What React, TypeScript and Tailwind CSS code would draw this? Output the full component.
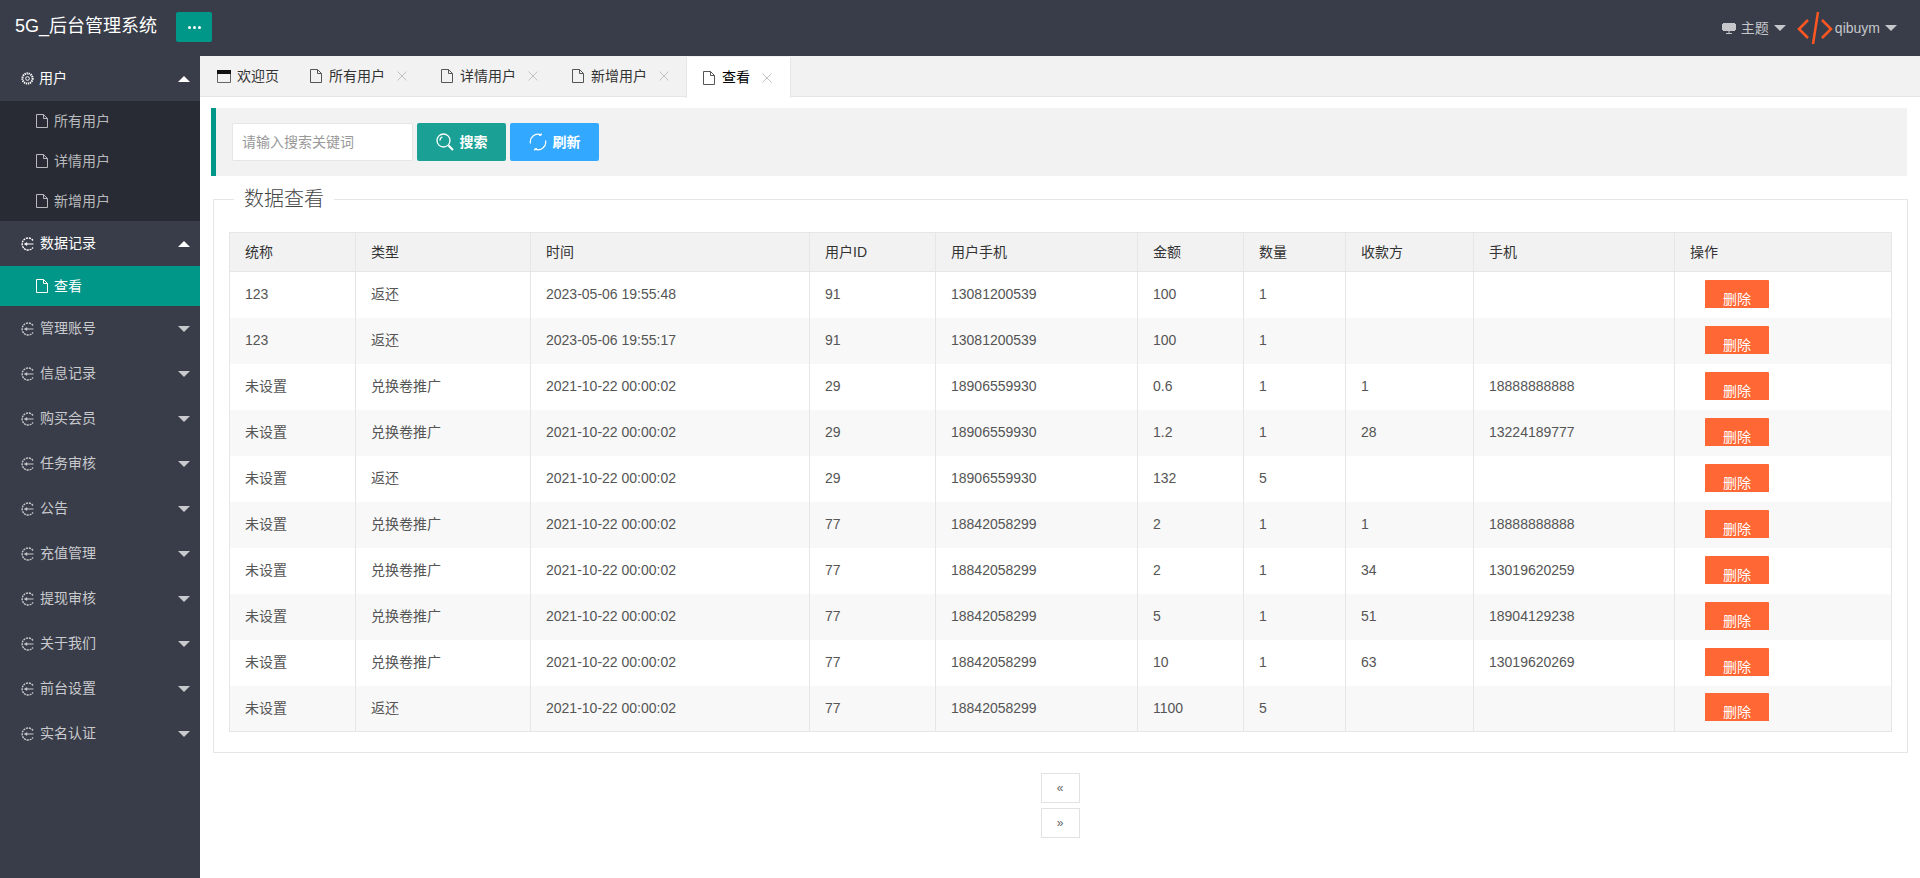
const menus = [
  { title: "用户", open: true, gear: true, subs: ["所有用户", "详情用户", "新增用户"] },
  { title: "数据记录", open: true, subs: ["查看"] },
  { title: "管理账号" },
  { title: "信息记录" },
  { title: "购买会员" },
  { title: "任务审核" },
  { title: "公告" },
  { title: "充值管理" },
  { title: "提现审核" },
  { title: "关于我们" },
  { title: "前台设置" },
  { title: "实名认证" },
]

const tabs = ["所有用户", "详情用户", "新增用户", "查看"]

const columns = [
  ["统称", "w-[126px]"],
  ["类型", "w-[175px]"],
  ["时间", "w-[279px]"],
  ["用户ID", "w-[126px]"],
  ["用户手机", "w-[202px]"],
  ["金额", "w-[106px]"],
  ["数量", "w-[102px]"],
  ["收款方", "w-[128px]"],
  ["手机", "w-[201px]"],
  ["操作", "w-[217px]"],
]

const rows = [
  ["123", "返还", "2023-05-06 19:55:48", "91", "13081200539", "100", "1", "", ""],
  ["123", "返还", "2023-05-06 19:55:17", "91", "13081200539", "100", "1", "", ""],
  ["未设置", "兑换卷推广", "2021-10-22 00:00:02", "29", "18906559930", "0.6", "1", "1", "18888888888"],
  ["未设置", "兑换卷推广", "2021-10-22 00:00:02", "29", "18906559930", "1.2", "1", "28", "13224189777"],
  ["未设置", "返还", "2021-10-22 00:00:02", "29", "18906559930", "132", "5", "", ""],
  ["未设置", "兑换卷推广", "2021-10-22 00:00:02", "77", "18842058299", "2", "1", "1", "18888888888"],
  ["未设置", "兑换卷推广", "2021-10-22 00:00:02", "77", "18842058299", "2", "1", "34", "13019620259"],
  ["未设置", "兑换卷推广", "2021-10-22 00:00:02", "77", "18842058299", "5", "1", "51", "18904129238"],
  ["未设置", "兑换卷推广", "2021-10-22 00:00:02", "77", "18842058299", "10", "1", "63", "13019620269"],
  ["未设置", "返还", "2021-10-22 00:00:02", "77", "18842058299", "1100", "5", "", ""],
]

const FileIcon = ({ className = "" }: { className?: string }) => (
  <svg viewBox="0 0 12 14" className={`w-[12px] h-[14px] shrink-0 ${className}`} fill="none" stroke="currentColor" strokeWidth="1">
    <path d="M.5 .5h7l4 4v9h-11z" />
    <path d="M7.500 .5v4h4" />
  </svg>
)

const GroupIcon = ({ gear }: { gear?: boolean }) =>
  gear ? (
    <svg viewBox="0 0 14 14" className="w-[13px] h-[13px] shrink-0" fill="none" stroke="currentColor">
      <circle cx="7" cy="7" r="5.500" strokeWidth="2.200" strokeDasharray="1.400 .8" />
      <circle cx="7" cy="7" r="2" strokeWidth="1" />
    </svg>
  ) : (
    <svg viewBox="0 0 14 14" className="w-[14px] h-[14px] shrink-0" fill="none" stroke="currentColor">
      <path d="M12 3.500A6 6 0 1 0 12 10.500" strokeWidth="1.400" strokeDasharray="2 .8" />
      <path d="M3.500 7h9" strokeWidth="1" />
      <path d="M6 5.500v3l-2.500-1.500z" fill="currentColor" strokeWidth=".5" />
    </svg>
  )

const Caret = ({ up, className = "" }: { up?: boolean; className?: string }) => (
  <span
    className={`w-0 h-0 border-x-[6px] border-x-transparent ${
      up ? "border-b-[6px] border-b-current" : "border-t-[6px] border-t-current"
    } ${className}`}
  />
)

const Sidebar = () => (
  <aside className="w-[200px] shrink-0 bg-[#393d49] text-[14px]">
    {menus.map((menu) => (
      <div key={menu.title}>
        <div className={`h-[45px] flex items-center pl-[21px] pr-[10px] ${menu.open ? "text-white" : "text-[#c9cacd]"}`}>
          <GroupIcon gear={menu.gear} />
          <span className="ml-[5px] flex-1">{menu.title}</span>
          <Caret up={menu.open} />
        </div>
        {menu.subs && (
          <div className="bg-[#282b33]">
            {menu.subs.map((sub) => (
              <div
                key={sub}
                className={`h-[40px] flex items-center pl-[36px] ${
                  sub === "查看" ? "bg-[#009688] text-white" : "text-[#b9babd]"
                }`}
              >
                <FileIcon />
                <span className="ml-[6px]">{sub}</span>
              </div>
            ))}
          </div>
        )}
      </div>
    ))}
  </aside>
)

const Header = () => (
  <header className="h-[56px] shrink-0 bg-[#393d49] flex items-center pl-[15px] pr-[23px]">
    <span className="w-[161px] text-[18px] text-white -mt-[4px]">5G_后台管理系统</span>
    <button className="w-[36px] h-[30px] -mt-[2px] rounded-[2px] bg-[#009688] text-white flex items-center justify-center gap-[2px]">
      <span className="w-[3px] h-[3px] rounded-full bg-white" />
      <span className="w-[3px] h-[3px] rounded-full bg-white" />
      <span className="w-[3px] h-[3px] rounded-full bg-white" />
    </button>
    <div className="ml-auto flex items-center text-[14px] text-[#c6c7ca]">
      <svg viewBox="0 0 14 14" className="w-[14px] h-[14px]" fill="currentColor">
        <path d="M1 2h12v1h1v6h-1v1h-12v-1h-1v-6h1z" />
        <path d="M6.500 10h1v2h-1zM4 12h6v1h-6z" />
      </svg>
      <span className="ml-[5px]">主题</span>
      <Caret className="ml-[5px]" />
      <svg viewBox="0 0 36 34" className="ml-[11px] w-[36px] h-[34px]" fill="none" stroke="#ff5722" strokeWidth="2.500">
        <path d="M11 9l-9 9 9 9" />
        <path d="M25 9l9 9-9 9" />
        <path d="M21 1l-5 32" />
      </svg>
      <span className="ml-[2px]">qibuym</span>
      <Caret className="ml-[5px]" />
    </div>
  </header>
)

const TabBar = () => (
  <div className="h-[41px] shrink-0 bg-[#f2f2f2] border-b border-[#e6e6e6] flex text-[14px] text-[#333]">
    <div className="w-[94px] flex items-center pl-[17px]">
      <svg viewBox="0 0 14 13" className="w-[14px] h-[13px] shrink-0" fill="none" stroke="#666">
        <path d="M.5 .5h13v12h-13z" />
        <path d="M0 0h14v4h-14z" fill="#111" stroke="none" />
      </svg>
      <span className="ml-[6px]">欢迎页</span>
    </div>
    {tabs.map((tab) => {
      const active = tab === "查看"
      return (
        <div
          key={tab}
          className={`flex items-center ${
            active ? "h-[41px] mt-px -ml-px pl-[16px] pr-[18px] bg-white border-x border-[#e6e6e6] text-black" : "pl-[16px] pr-[18px]"
          }`}
        >
          <FileIcon className="text-[#555]" />
          <span className="ml-[7px]">{tab}</span>
          <svg viewBox="0 0 10 10" className="ml-[12px] w-[10px] h-[10px]" fill="none" stroke="#c2c2c2">
            <path d="M.5 .5l9 9M9.500 .5l-9 9" />
          </svg>
        </div>
      )
    })}
  </div>
)

const SearchPanel = () => (
  <div className="h-[68px] bg-[#f2f2f2] border-l-[5px] border-[#009688] flex items-center pl-[16px] text-[14px]">
    <input
      className="w-[181px] h-[38px] bg-white border border-[#e6e6e6] rounded-[2px] px-[9px] outline-none placeholder:text-[#999]"
      placeholder="请输入搜索关键词"
    />
    <button className="ml-[4px] w-[89px] h-[38px] rounded-[2px] bg-[#1aa094] text-white flex items-center justify-center gap-[6px] font-bold">
      <svg viewBox="0 0 18 18" className="w-[18px] h-[18px]" fill="none" stroke="currentColor" strokeWidth="1.300">
        <circle cx="7.500" cy="7.500" r="6.500" />
        <path d="M4 7.500a3.500 3.500 0 0 1 2.500-3.500" />
        <path d="M12.500 12.500l4.500 4.500" strokeWidth="2.200" />
      </svg>
      搜索
    </button>
    <button className="ml-[4px] w-[89px] h-[38px] rounded-[2px] bg-[#33a8ff] text-white flex items-center justify-center gap-[6px] font-bold">
      <svg viewBox="0 0 18 18" className="w-[18px] h-[18px]" fill="none" stroke="currentColor" strokeWidth="1.200">
        <path d="M1.500 10.500a7.500 7.500 0 0 1 10.500-8.500" />
        <path d="M16.500 7.500a7.500 7.500 0 0 1-10.500 8.500" />
        <path d="M12.500 .5l-.5 1.500-2 .5M5.500 17.500l.5-1.500 2-.5" />
      </svg>
      刷新
    </button>
  </div>
)

const DataTable = () => (
  <table className="w-[1662px] table-fixed border-collapse border border-[#e6e6e6] text-[14px]">
    <thead>
      <tr className="h-[39px] bg-[#f2f2f2]">
        {columns.map(([name, width]) => (
          <th key={name} className={`${width} px-[15px] font-normal text-left text-[#333] border border-[#e6e6e6]`}>
            {name}
          </th>
        ))}
      </tr>
    </thead>
    <tbody>
      {rows.map((row, i) => (
        <tr key={i} className={`h-[46px] ${i % 2 ? "bg-[#f8f8f8]" : "bg-white"}`}>
          {row.map((cell, j) => (
            <td key={j} className="px-[15px] text-[#555] border-x border-[#e6e6e6]">
              {cell}
            </td>
          ))}
          <td className="pl-[30px] border-x border-[#e6e6e6]">
            <button className="block w-[64px] h-[28px] mb-[2px] overflow-hidden bg-[#ff6835] text-white text-[14px] leading-[38px] rounded-t-[1px]">
              删除
            </button>
          </td>
        </tr>
      ))}
    </tbody>
  </table>
)

const Pager = () => (
  <div className="mt-[20px] flex flex-col items-center gap-[5px] text-[12px] text-[#666]">
    <span className="w-[39px] h-[30px] border border-[#e2e2e2] flex items-center justify-center">«</span>
    <span className="w-[39px] h-[30px] border border-[#e2e2e2] flex items-center justify-center">»</span>
  </div>
)

export default function App() {
  return (
    <div className="h-screen flex flex-col overflow-hidden bg-white [font-family:'Liberation_Sans','Noto_Sans_CJK_SC',sans-serif]">
      <Header />
      <div className="flex-1 flex min-h-0">
        <Sidebar />
        <main className="flex-1 min-w-0">
          <TabBar />
          <div className="pt-[11px] pl-[11px] pr-[13px]">
            <SearchPanel />
            <fieldset className="mt-[11px] ml-[2px] border border-[#e6e6e6] pt-[21px] px-[15px] pb-[20px]">
              <legend className="ml-[5px] px-[10px] text-[20px] leading-[24px] font-light text-[#444]">数据查看</legend>
              <DataTable />
            </fieldset>
          </div>
          <Pager />
        </main>
      </div>
    </div>
  )
}
